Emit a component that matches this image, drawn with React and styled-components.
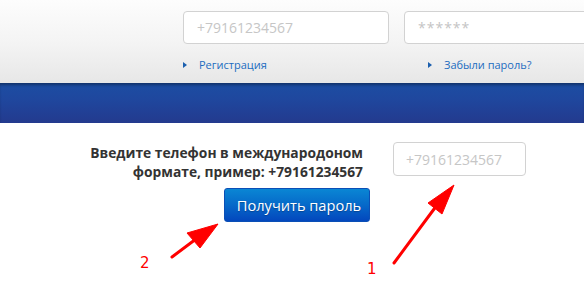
import React from "react";
import styled, { createGlobalStyle } from "styled-components";

const Global = createGlobalStyle`
  html, body { margin: 0; padding: 0; background: #fff; }
  body { font-family: "Open Sans", "Liberation Sans", sans-serif; overflow: hidden; width: 584px; height: 284px; }
  #root { position: relative; width: 584px; height: 284px; overflow: hidden; }
`;

const Header = styled.header`
  height: 83px;
  background: linear-gradient(#fdfdfd 0%, #f4f4f4 50%, #e7e7e7 100%);
  box-sizing: border-box;
  padding: 11px 0 0 183px;
  display: flex;
  flex-direction: column;
  gap: 13px;
`;

const FieldRow = styled.div`
  display: flex;
  gap: 15px;
  width: 700px;
`;

const HeaderInput = styled.input`
  box-sizing: border-box;
  width: 206px;
  height: 33px;
  border: 1px solid #d2d2d2;
  border-radius: 4px;
  background: #fff;
  padding: 0 0 0 13px;
  font-family: "Open Sans", "Liberation Sans", sans-serif;
  font-size: 14px;
  color: #333;
  outline: none;
  &::placeholder { color: ${(p) => (p.$stars ? "#c4c4c4" : "#c6c6c6")}; letter-spacing: ${(p) => (p.$stars ? "1px" : "0")}; }
`;

const LinkRow = styled.div`
  display: flex;
  width: 400px;
`;

const NavLink = styled.a`
  display: flex;
  align-items: center;
  width: ${(p) => p.$w}px;
  font-size: 11px;
  color: #1c6cc0;
  text-decoration: none;
  line-height: 16px;
  &::before {
    content: "";
    display: block;
    width: 0;
    height: 0;
    border-top: 3.5px solid transparent;
    border-bottom: 3.5px solid transparent;
    border-left: 4px solid #1b5fae;
    margin-right: 12px;
  }
`;

const Band = styled.div`
  height: 40px;
  background: linear-gradient(#1c4ea3 0%, #1f479e 40%, #233a8e 100%);
  box-shadow: inset 0 3px 3px -1px rgba(0, 0, 0, 0.35);
`;

const Content = styled.main`
  display: flex;
  align-items: flex-start;
  padding-top: 20px;
`;

const LeftCol = styled.div`
  width: 370px;
  display: flex;
  flex-direction: column;
  align-items: flex-end;
  gap: 7px;
`;

const Prompt = styled.p`
  margin: 0;
  padding-right: 7px;
  text-align: right;
  font-weight: 700;
  font-size: 13.8px;
  line-height: 19px;
  color: #333;
`;

const Button = styled.button`
  box-sizing: border-box;
  width: 146px;
  height: 34px;
  border: 1px solid #0b4fb6;
  border-radius: 3px;
  background: linear-gradient(#0a86d4 0%, #0669c9 50%, #0347bd 100%);
  color: #fff;
  font-family: "Open Sans", "Liberation Sans", sans-serif;
  font-size: 14.6px;
  padding: 0 0 0 4px;
  text-shadow: 0 1px 1px rgba(0, 0, 0, 0.25);
`;

const PhoneInput = styled(HeaderInput)`
  width: 133px;
  height: 34px;
  margin-left: 23px;
  margin-top: -1px;
  padding-left: 12px;
`;

const Overlay = styled.svg`
  position: absolute;
  left: 0;
  top: 0;
  pointer-events: none;
`;

const Label = styled.span`
  position: absolute;
  left: ${(p) => p.$x}px;
  top: ${(p) => p.$y}px;
  font-family: "DejaVu Sans", "Liberation Sans", sans-serif;
  font-size: 15px;
  color: #f00;
  line-height: 1;
`;

export default function App() {
  return (
    <>
      <Global />
      <Header>
        <FieldRow>
          <HeaderInput placeholder="+79161234567" />
          <HeaderInput $stars placeholder="******" />
        </FieldRow>
        <LinkRow>
          <NavLink href="#" $w={245}>Регистрация</NavLink>
          <NavLink href="#" $w={150}>Забыли пароль?</NavLink>
        </LinkRow>
      </Header>
      <Band />
      <Content>
        <LeftCol>
          <Prompt>
            Введите телефон в международоном
            <br />
            формате, пример: +79161234567
          </Prompt>
          <Button>Получить пароль</Button>
        </LeftCol>
        <PhoneInput placeholder="+79161234567" />
      </Content>
      <Overlay width="584" height="284" viewBox="0 0 584 284">
        <g fill="#f00" stroke="#f00">
          <line x1="394" y1="263" x2="440" y2="201" strokeWidth="3" strokeLinecap="round" />
          <polygon points="454,185 428,203 442,214" strokeWidth="1" />
          <line x1="172" y1="257" x2="204" y2="233" strokeWidth="3" strokeLinecap="round" />
          <polygon points="218,224 187,233 200,248" strokeWidth="1" />
        </g>
      </Overlay>
      <Label $x={367} $y={262}>1</Label>
      <Label $x={140} $y={256}>2</Label>
    </>
  );
}
